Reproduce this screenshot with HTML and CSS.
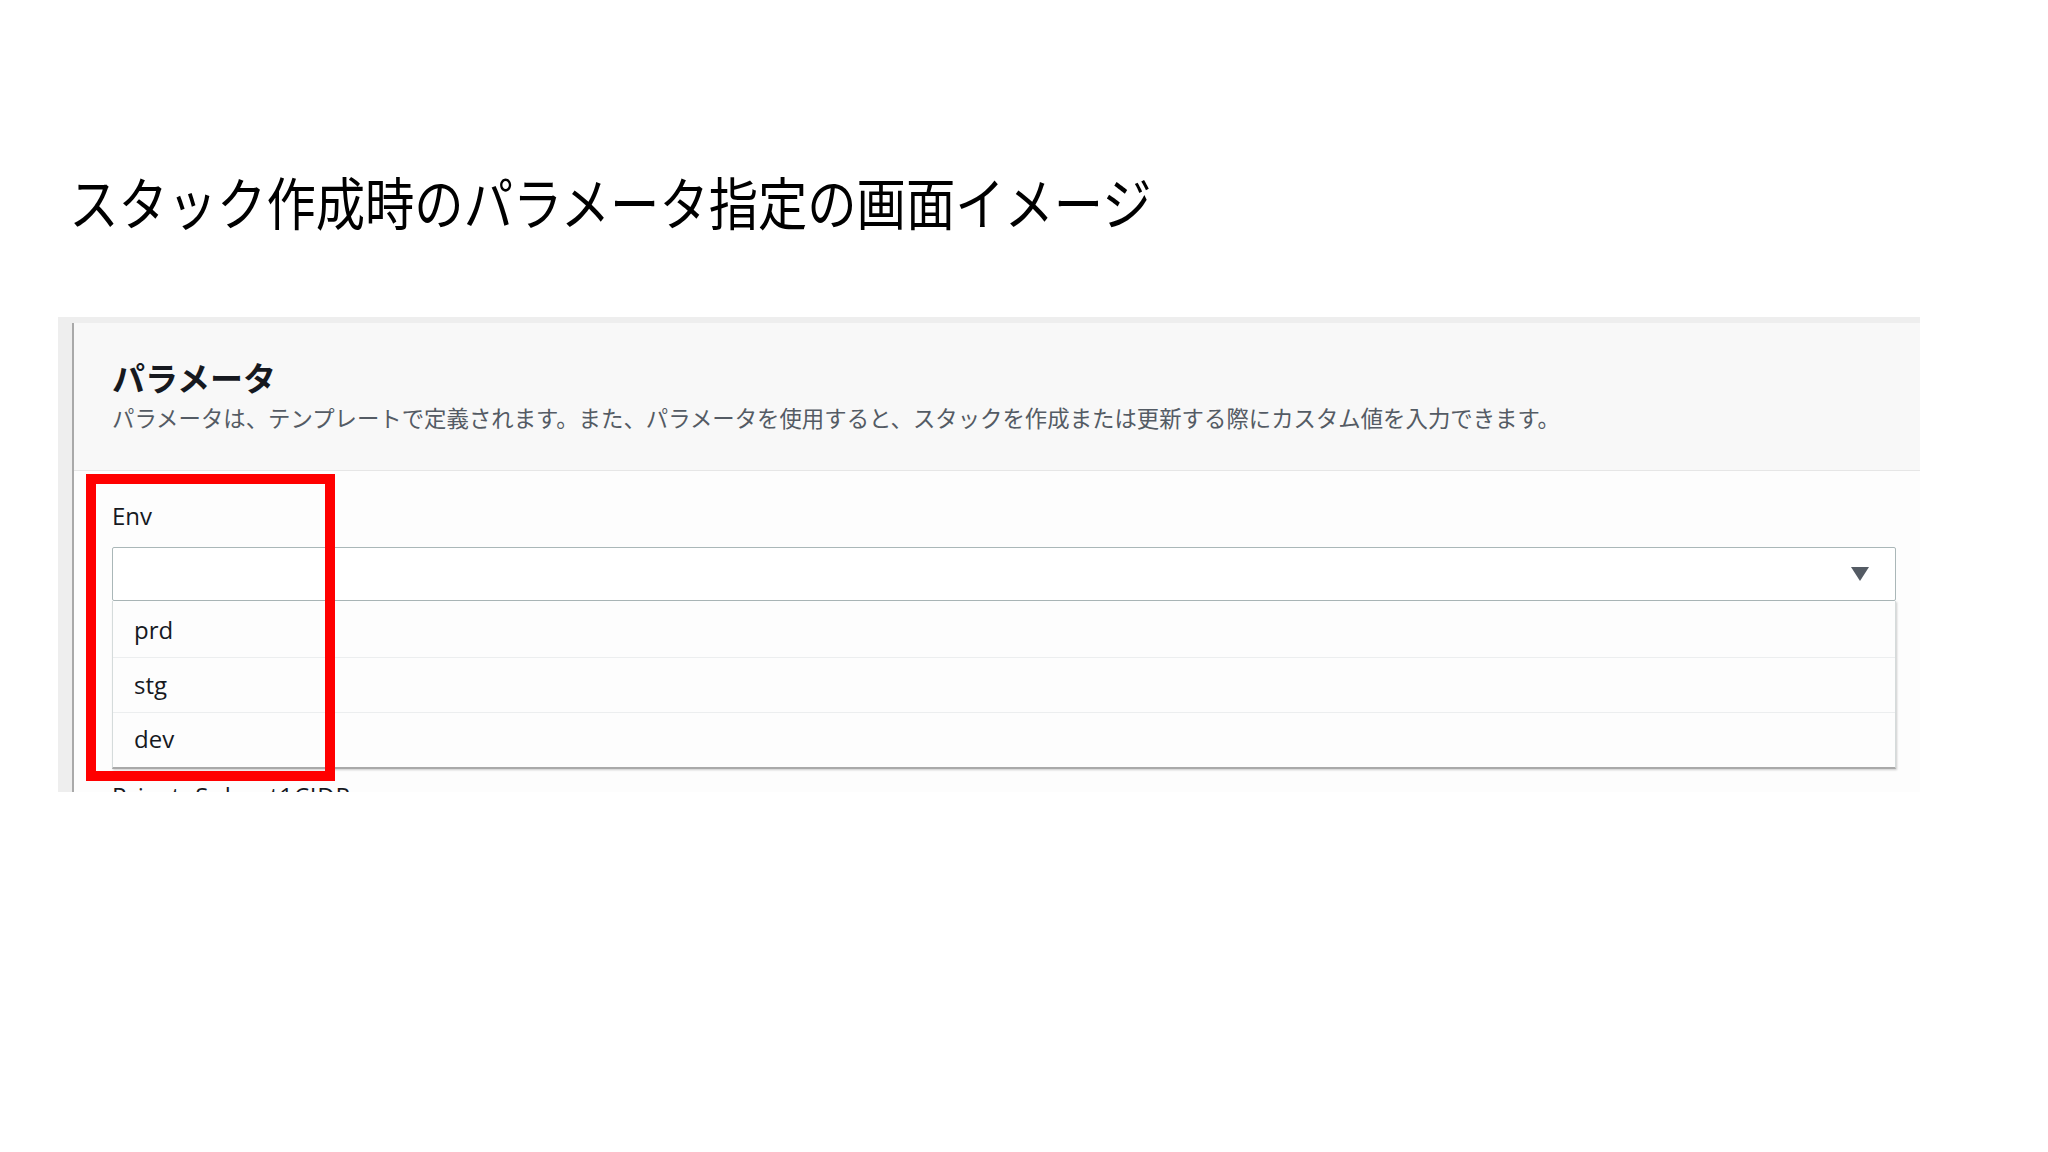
FILE: index.html
```html
<!DOCTYPE html>
<html lang="ja">
<head>
    <meta charset="UTF-8">
    <meta name="viewport" content="width=device-width, initial-scale=1.0">
    <title>スタック作成時のパラメータ指定の画面イメージ</title>
    <link rel="stylesheet" href="styles.css">
</head>
<body>
    <h1 class="slide-title">スタック作成時のパラメータ指定の画面イメージ</h1>

    <div class="shot">
        <div class="card">
            <div class="card-header">
                <h2>パラメータ</h2>
                <p class="card-desc">パラメータは、テンプレートで定義されます。また、パラメータを使用すると、スタックを作成または更新する際にカスタム値を入力できます。</p>
            </div>
            <div class="card-body">
                <div class="field">
                    <label class="field-label">Env</label>
                    <div class="select">
                        <svg class="caret" width="18" height="14" viewBox="0 0 18 14"><path d="M0 0 H18 L9 14 Z" fill="#545b64"/></svg>
                    </div>
                    <ul class="options">
                        <li>prd</li>
                        <li>stg</li>
                        <li>dev</li>
                    </ul>
                </div>
                <div class="field">
                    <label class="field-label next-label">PrivateSubnet1CIDR</label>
                </div>
                <div class="highlight"></div>
            </div>
        </div>
    </div>
</body>
</html>
```

FILE: styles.css
```css
body {
    margin: 0;
    padding: 0;
    background: #ffffff;
    font-family: "Noto Sans CJK JP", "Noto Sans", sans-serif;
}
.slide-title {
    margin: 0;
    padding: 172px 0 0 80px;
    font-size: 57px;
    line-height: 57px;
    font-weight: normal;
    color: #000;
    white-space: nowrap;
    transform: scaleX(0.865);
    transform-origin: left top;
}
.shot {
    margin: 88px 0 0 58px;
    width: 1862px;
    height: 475px;
    overflow: hidden;
    background: #eeeeee;
    padding: 6px 0 0 14px;
    box-sizing: border-box;
}
.card {
    height: 100%;
    background: #fdfdfd;
    border-left: 2px solid #a9a9a9;
}
.card-header {
    background: #f8f8f8;
    padding: 34px 24px 38px 38px;
    border-bottom: 1px solid #e6e6e6;
}
.card-header h2 {
    margin: 0;
    font-size: 33px;
    line-height: 40px;
    font-weight: bold;
    color: #16191f;
}
.card-desc {
    margin: 5px 0 0;
    font-size: 22.4px;
    line-height: 30px;
    color: #545b64;
    white-space: nowrap;
}
.card-body {
    position: relative;
    padding: 30px 24px 0 38px;
}
.field-label {
    display: block;
    font-family: "Open Sans", sans-serif;
    font-size: 24px;
    line-height: 30px;
    color: #16191f;
}
.next-label {
    letter-spacing: 0.8px;
}
.select {
    margin-top: 16px;
    height: 54px;
    border: 1px solid #aab7b8;
    border-radius: 2px;
    background: #fff;
    box-sizing: border-box;
    display: flex;
    align-items: center;
    justify-content: flex-end;
    padding-right: 26px;
}
.options {
    list-style: none;
    margin: 0;
    padding: 0;
    background: #fdfdfd;
    border: 1px solid #d5dbdb;
    border-top: none;
    border-bottom: 2px solid #a9a9a9;
    box-shadow: 1px 1px 2px rgba(0, 0, 0, 0.2);
}
.options li {
    height: 54px;
    line-height: 54px;
    padding-left: 21px;
    font-family: "Open Sans", sans-serif;
    font-size: 24px;
    color: #16191f;
    border-top: 1px solid #eceeef;
}
.options li:first-child {
    height: 56px;
    line-height: 58px;
    border-top: none;
}
.options li:last-child {
    line-height: 52px;
}
.field + .field {
    margin-top: 12px;
}
.highlight {
    position: absolute;
    left: 12px;
    top: 3px;
    width: 229px;
    height: 287px;
    border: 10px solid #ff0000;
}
```
